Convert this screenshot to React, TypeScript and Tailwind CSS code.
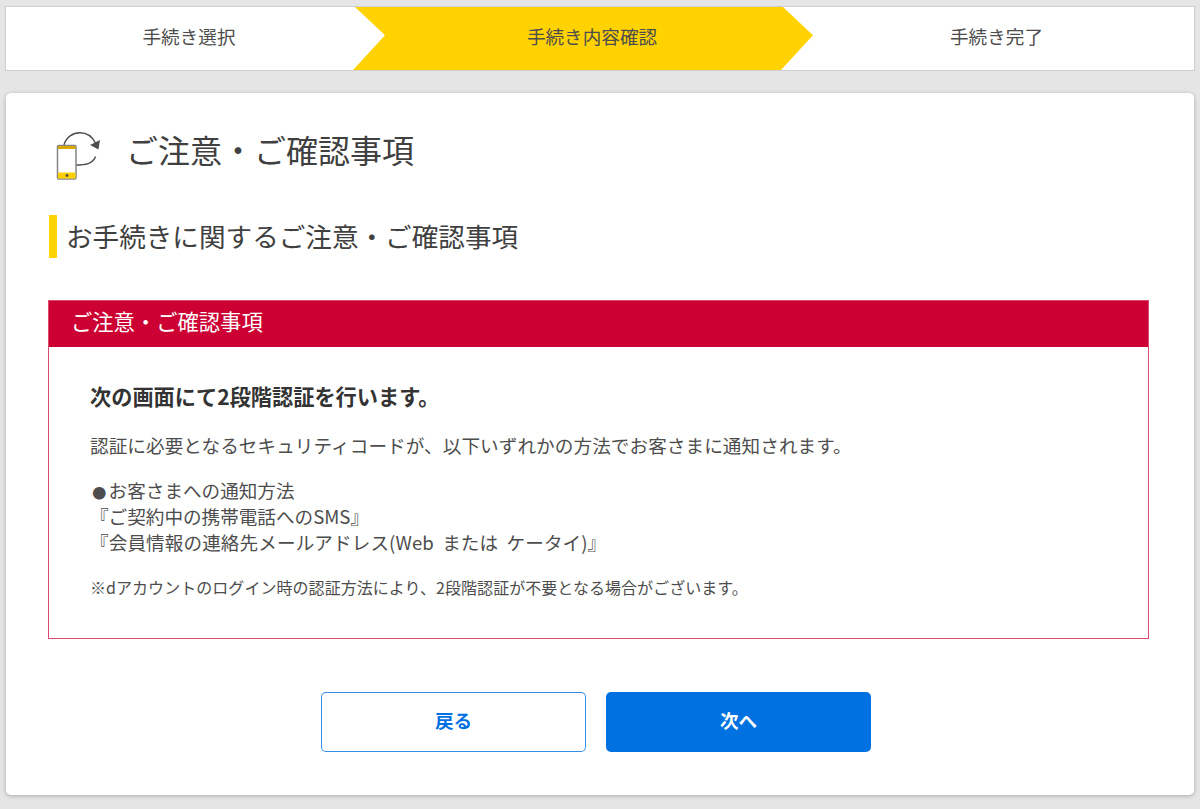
const font = "font-['Noto_Sans_CJK_JP','Noto_Sans',sans-serif]";

function PhoneIcon() {
  return (
    <svg width="46" height="48" viewBox="0 0 46 48" fill="none" className="shrink-0">
      {/* arrow */}
      <path d="M8 13 C10 5 17 0.7 24 0.7 C31 0.7 36 4 39.5 11" stroke="#4d4d4d" strokeWidth="1.4" />
      <path d="M34 13 L44 8 L42.5 17.5 Z" fill="#4d4d4d" />
      <path d="M20 33 C29 33 37 32 39.5 24.5" stroke="#4d4d4d" strokeWidth="1.4" />
      {/* phone */}
      <rect x="1.5" y="13.5" width="18.5" height="33.5" rx="1.2" fill="#fff" stroke="#858585" strokeWidth="1.5" />
      <rect x="2" y="14" width="17.5" height="3" fill="#d9a900" />
      <rect x="2" y="40.5" width="17.5" height="6" fill="#ffd000" />
      <circle cx="11" cy="43.5" r="1.4" fill="#4d4d4d" />
    </svg>
  );
}

export default function App() {
  return (
    <div className={`${font} h-[809px] overflow-hidden bg-[#e5e5e5] px-[5px] pt-[6px] text-[#4d4d4d] [text-spacing-trim:space-all]`}>
      {/* Steps */}
      <div className="flex h-[65px] w-[1190px] border border-[#cfcfcf] bg-white text-[18.6px]">
        <div className="flex w-[347px] items-center justify-center pb-[6px] pl-[19px]">手続き選択</div>
        <div className="flex w-[460px] items-center justify-center bg-[#ffd200] pb-[6px] pl-[18px] [clip-path:polygon(2px_0,430px_0,460px_45%,428px_100%,0_100%,32px_45%)]">
          手続き内容確認
        </div>
        <div className="flex flex-1 items-center justify-center pb-[6px] pr-[14px]">手続き完了</div>
      </div>

      {/* Card */}
      <div className="mt-[22px] ml-px h-[702px] w-[1188px] rounded-[5px] bg-white px-[43px] pt-[32px] shadow-[0_1px_4px_rgba(0,0,0,0.25)]">
        <div className="flex h-[56px] items-center">
          <div className="ml-[7px] mt-[6px]">
            <PhoneIcon />
          </div>
          <h1 className="mb-[8px] ml-[24px] text-[32px] leading-[48px] text-[#404040]">ご注意・ご確認事項</h1>
        </div>

        <h2 className="mt-[34px] h-[43px] border-l-[8px] border-[#ffd200] pl-[9px] text-[26.6px] leading-[41px] text-[#404040]">
          お手続きに関するご注意・ご確認事項
        </h2>

        {/* Notice box */}
        <div className="-ml-px mt-[42px] w-[1101px] border border-[#cc0033]/70">
          <div className="h-[46px] bg-[#cc0033] pl-[22px] text-[21.3px] leading-[40px] text-white">
            ご注意・ご確認事項
          </div>
          <div className="h-[291px] pl-[41px] pt-[34px]">
            <p className="text-[21.2px] font-bold leading-[30px] text-[#333333]">次の画面にて2段階認証を行います。</p>
            <p className="mt-[20px] text-[18.6px] leading-[28px] tracking-[0.08px]">
              認証に必要となるセキュリティコードが、以下いずれかの方法でお客さまに通知されます。
            </p>
            <p className="mt-[18px] text-[18.6px] leading-[26px]">
              <span className="inline-block w-[18.6px] text-center text-[14px] leading-[14px]">●</span>お客さまへの通知方法
              <br />
              『ご契約中の携帯電話へのSMS』
              <br />
              <span className="tracking-[0.1px] [word-spacing:4px]">『会員情報の連絡先メールアドレス(Web または ケータイ)』</span>
            </p>
            <p className="mt-[20px] text-[16px] leading-[24px] tracking-[0.05px]">
              ※dアカウントのログイン時の認証方法により、2段階認証が不要となる場合がございます。
            </p>
          </div>
        </div>

        {/* Buttons */}
        <div className="ml-[272px] mt-[53px] flex gap-[20px]">
          <button className="h-[60px] w-[265px] rounded-[5px] border border-[#0071e0]/80 bg-white pb-[4px] text-[18.6px] font-bold text-[#0071e0]">
            戻る
          </button>
          <button className="h-[60px] w-[265px] rounded-[5px] bg-[#0071e0] pb-[4px] text-[18.6px] font-bold text-white">
            次へ
          </button>
        </div>
      </div>
    </div>
  );
}
